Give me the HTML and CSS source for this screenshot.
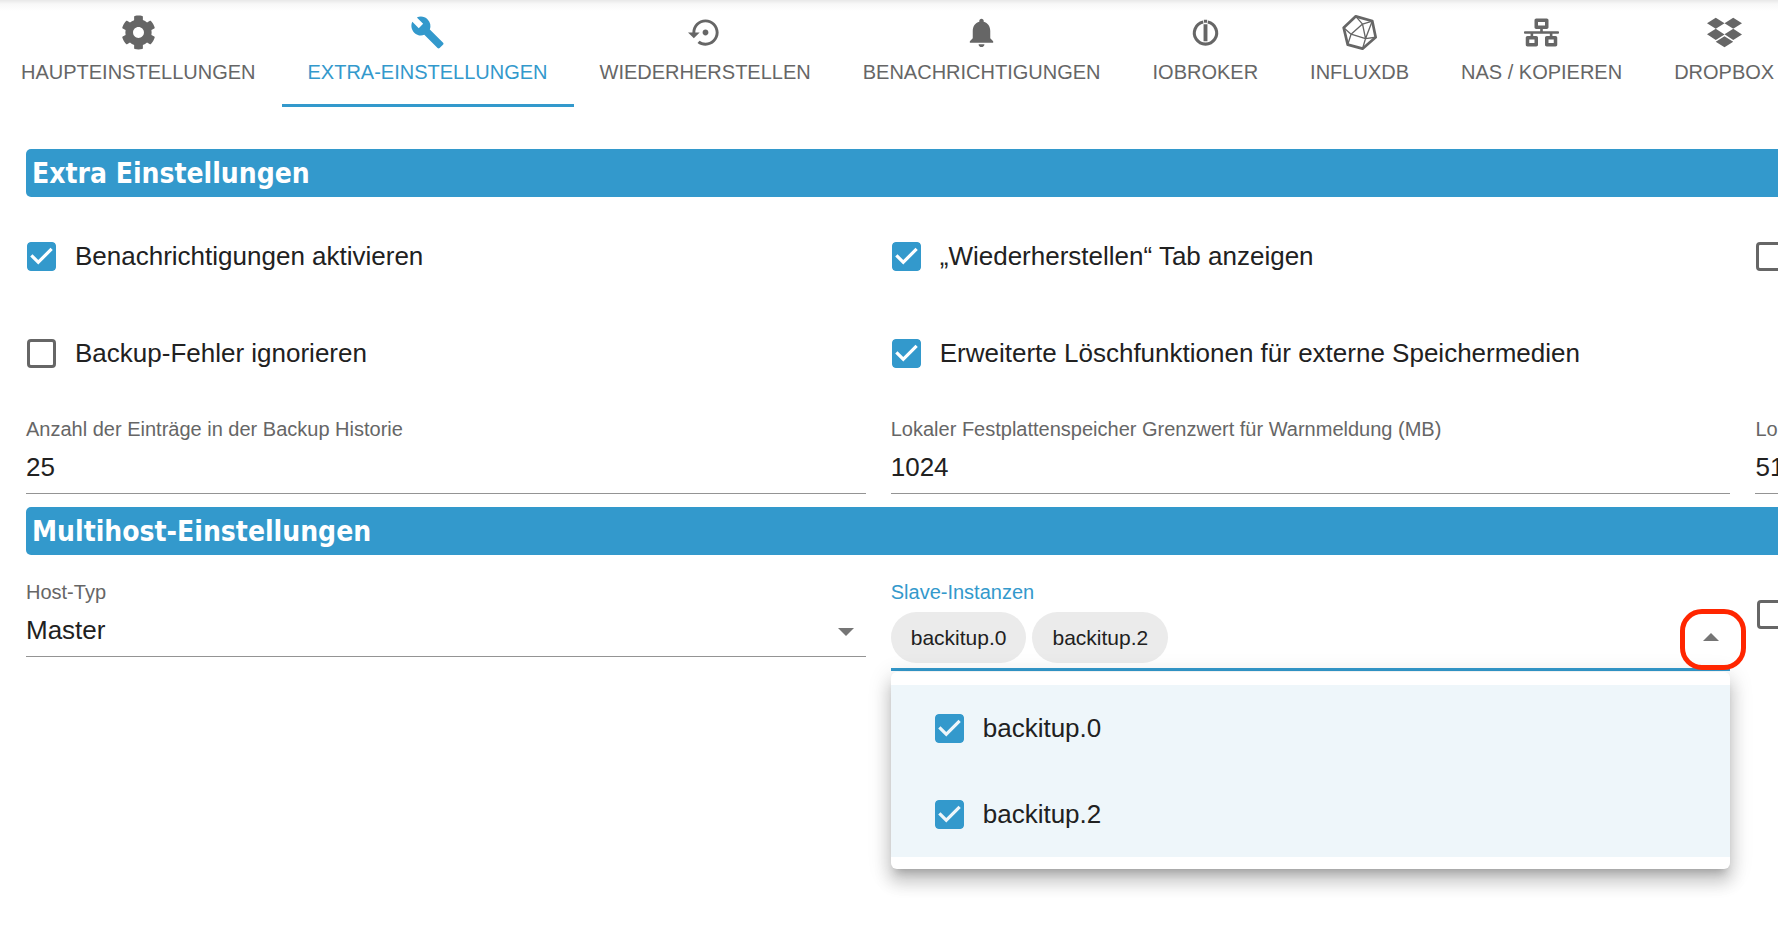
FILE: index.html
```html
<!DOCTYPE html>
<html lang="de">
<head>
<meta charset="utf-8">
<title>Backitup</title>
<link rel="stylesheet" href="styles.css">
</head>
<body>
<nav class="tabs">
  <button class="tab" type="button">
    <svg class="tab-icon" viewBox="0 0 512 512"><path d="M487.4 315.7l-42.6-24.6c4.3-23.2 4.3-47 0-70.2l42.6-24.6c4.9-2.8 7.1-8.6 5.5-14-11.1-35.6-30-67.8-54.7-94.6-3.8-4.1-10-5.1-14.8-2.3L380.8 110c-17.9-15.4-38.5-27.3-60.8-35.1V25.8c0-5.6-3.9-10.5-9.4-11.7-36.7-8.2-74.3-7.8-109.2 0-5.5 1.2-9.4 6.1-9.4 11.7V75c-22.2 7.9-42.8 19.8-60.8 35.1L88.7 85.5c-4.9-2.8-11-1.9-14.8 2.3-24.7 26.7-43.6 58.9-54.7 94.6-1.7 5.4.6 11.2 5.5 14L67.3 221c-4.3 23.2-4.3 47 0 70.2l-42.6 24.6c-4.9 2.8-7.1 8.6-5.5 14 11.1 35.6 30 67.8 54.7 94.6 3.8 4.1 10 5.1 14.8 2.3l42.6-24.6c17.9 15.4 38.5 27.3 60.8 35.1v49.2c0 5.6 3.9 10.5 9.4 11.7 36.7 8.2 74.3 7.8 109.2 0 5.5-1.2 9.4-6.1 9.4-11.7v-49.2c22.2-7.9 42.8-19.8 60.8-35.1l42.6 24.6c4.9 2.8 11 1.9 14.8-2.3 24.7-26.7 43.6-58.9 54.7-94.6 1.5-5.5-.7-11.3-5.6-14.1zM256 336c-44.1 0-80-35.9-80-80s35.9-80 80-80 80 35.9 80 80-35.9 80-80 80z"/></svg>
    <span>HAUPTEINSTELLUNGEN</span>
  </button>
  <button class="tab tab-active" type="button">
    <svg class="tab-icon" viewBox="0 0 24 24"><path d="M22.7 19l-9.1-9.1c.9-2.3.4-5-1.5-6.9-2-2-5-2.4-7.4-1.3L9 6 6 9 1.6 4.7C.4 7.1.9 10.1 2.9 12.1c1.9 1.9 4.6 2.4 6.9 1.5l9.1 9.1c.4.4 1 .4 1.4 0l2.3-2.3c.5-.4.5-1.1.1-1.4z"/></svg>
    <span>EXTRA-EINSTELLUNGEN</span>
  </button>
  <button class="tab" type="button">
    <svg class="tab-icon" viewBox="0 0 24 24"><path d="M14 12c0-1.1-.9-2-2-2s-2 .9-2 2 .9 2 2 2 2-.9 2-2zm-2-9c-4.97 0-9 4.03-9 9H0l4 4 4-4H5c0-3.87 3.13-7 7-7s7 3.13 7 7-3.13 7-7 7c-1.51 0-2.91-.49-4.06-1.3l-1.42 1.44C8.04 20.3 9.94 21 12 21c4.97 0 9-4.03 9-9s-4.03-9-9-9z"/></svg>
    <span>WIEDERHERSTELLEN</span>
  </button>
  <button class="tab" type="button">
    <svg class="tab-icon" viewBox="0 0 24 24"><path d="M12 22c1.100 0 2-.9 2-2h-4c0 1.100.89 2 2 2zm6-6v-5c0-3.070-1.640-5.640-4.500-6.320V4c0-.83-.67-1.500-1.500-1.500s-1.500.67-1.500 1.500v.68C7.630 5.360 6 7.920 6 11v5l-2 2v1h16v-1l-2-2z"/></svg>
    <span>BENACHRICHTIGUNGEN</span>
  </button>
  <button class="tab" type="button">
    <svg class="tab-icon" viewBox="0 0 36 36"><path d="M15.600 7.250A11.500 11.500 0 1 0 20.400 7.250" fill="none" stroke="currentColor" stroke-width="3.200"/><path d="M16.300 5h3.400v3h-3.400zM16 9.500h4v17.500h-4z"/></svg>
    <span>IOBROKER</span>
  </button>
  <button class="tab" type="button">
    <svg class="tab-icon" viewBox="0 0 104 104" fill="none" stroke="currentColor" stroke-linejoin="round"><path stroke-width="8" d="M41 4L90 18L100 66L61 100L17 88L5 38z"/><path stroke-width="4" d="M41 4L61 27L90 18L70 70L100 66M61 100L70 70L27 57L17 88M5 38L27 57L61 27L70 70"/></svg>
    <span>INFLUXDB</span>
  </button>
  <button class="tab" type="button">
    <svg class="tab-icon" viewBox="0 0 640 512"><path d="M640 264v-16c0-8.840-7.160-16-16-16H344v-40h72c17.670 0 32-14.330 32-32V32c0-17.670-14.330-32-32-32H224c-17.670 0-32 14.330-32 32v128c0 17.670 14.330 32 32 32h72v40H16c-8.840 0-16 7.160-16 16v16c0 8.840 7.160 16 16 16h104v40H64c-17.670 0-32 14.330-32 32v128c0 17.670 14.330 32 32 32h160c17.670 0 32-14.330 32-32V352c0-17.670-14.330-32-32-32h-56v-40h304v40h-56c-17.670 0-32 14.330-32 32v128c0 17.670 14.330 32 32 32h160c17.670 0 32-14.330 32-32V352c0-17.670-14.330-32-32-32h-56v-40h104c8.840 0 16-7.160 16-16zM256 128V64h128v64H256zm-64 320H96v-64h96v64zm352 0h-96v-64h96v64z"/></svg>
    <span>NAS / KOPIEREN</span>
  </button>
  <button class="tab" type="button">
    <svg class="tab-icon" viewBox="0 0 528 512"><path d="M264.400 116.300l-132 84.300 132 84.300-132 84.300L0 284.100l132.300-84.300L0 116.300 132.300 32l132.100 84.300zM131.600 395.700l132-84.300 132 84.300-132 84.300-132-84.300zm132.800-111.600l132-84.300-132-83.600L395.700 32 528 116.300l-132.300 84.300L528 284.800l-132.300 84.300-131.300-85z"/></svg>
    <span>DROPBOX</span>
  </button>
</nav>

<main class="content">
  <h2 class="section-title">Extra Einstellungen</h2>
  <div class="grid checks">
    <label class="check"><input class="box" type="checkbox" checked><span>Benachrichtigungen aktivieren</span></label>
    <label class="check"><input class="box" type="checkbox" checked><span>„Wiederherstellen“ Tab anzeigen</span></label>
    <div class="check"><input class="box" type="checkbox"></div>
    <label class="check"><input class="box" type="checkbox"><span>Backup-Fehler ignorieren</span></label>
    <label class="check"><input class="box" type="checkbox" checked><span>Erweiterte Löschfunktionen für externe Speichermedien</span></label>
  </div>
  <div class="grid fields">
    <div class="field">
      <label class="field-label" for="history">Anzahl der Einträge in der Backup Historie</label>
      <input class="control" id="history" type="text" value="25">
    </div>
    <div class="field">
      <label class="field-label" for="warn">Lokaler Festplattenspeicher Grenzwert für Warnmeldung (MB)</label>
      <input class="control" id="warn" type="text" value="1024">
    </div>
    <div class="field">
      <label class="field-label" for="limit">Lokaler</label>
      <input class="control" id="limit" type="text" value="512">
    </div>
  </div>

  <h2 class="section-title">Multihost-Einstellungen</h2>
  <div class="grid hosts">
    <div class="field">
      <label class="field-label" for="host">Host-Typ</label>
      <select class="control select" id="host"><option>Master</option></select>
    </div>
    <div class="field">
      <label class="field-label field-label-active" for="slaves">Slave-Instanzen</label>
      <div class="multi">
        <span class="chip">backitup.0</span>
        <span class="chip">backitup.2</span>
        <button class="toggle" id="slaves" type="button"><svg class="arrow" viewBox="0 0 16 8"><path d="M0 8L8 0L16 8z"/></svg></button>
        <div class="menu">
          <label class="option"><input class="box" type="checkbox" checked><span>backitup.0</span></label>
          <label class="option"><input class="box" type="checkbox" checked><span>backitup.2</span></label>
        </div>
      </div>
    </div>
    <div class="host-check"><input class="box" type="checkbox"></div>
  </div>
</main>
</body>
</html>
```
FILE: styles.css
```css
* {
  box-sizing: border-box;
}

body {
  margin: 0;
  min-height: 100vh;
  overflow: hidden;
  background: #fff;
  color: #212121;
  font-family: "Liberation Sans", Arial, sans-serif;
  font-size: 26px;
}

button,
input,
select {
  font: inherit;
  color: inherit;
}

.tabs {
  display: flex;
  overflow: hidden;
  background: linear-gradient(#e8e8e8, #f8f8f8 4px, #fff 11px);
}

.tab {
  flex: none;
  display: flex;
  flex-direction: column;
  align-items: center;
  gap: 10px;
  padding: 15px 26px 20px;
  border: 0;
  border-bottom: 3px solid transparent;
  background: none;
  color: #666;
  font-size: 20px;
  line-height: 24px;
  white-space: nowrap;
}

.tab:first-child {
  padding-left: 21px;
}

.tab-active {
  color: #3399cc;
  border-bottom-color: #3399cc;
}

.tab-icon {
  width: 35px;
  height: 35px;
}

.tab-icon:not([fill]) {
  fill: currentColor;
}

.content {
  width: max-content;
  padding: 42px 0 0 26px;
}

.section-title {
  margin: 0;
  padding: 2px 6px 0;
  border-radius: 5px;
  background: #3399cc;
  color: #fff;
  font: bold 28px/46px "DejaVu Sans Condensed", "DejaVu Sans", sans-serif;
}

.grid {
  display: grid;
  grid-template-columns: repeat(3, 47.23vw);
  column-gap: 25px;
}

.checks {
  margin-top: 11px;
  grid-auto-rows: 97px;
}

.check,
.option {
  display: flex;
  align-items: center;
  gap: 19px;
}

.check {
  padding-left: 1px;
}

.box {
  flex: none;
  appearance: none;
  width: 29px;
  height: 29px;
  margin: 0;
  border: 3px solid #666;
  border-radius: 4px;
}

.box:checked {
  border: 0;
  background: url("data:image/svg+xml,%3Csvg xmlns='http://www.w3.org/2000/svg' viewBox='3 3 18 18'%3E%3Cpath fill='%233399cc' d='M19 3H5c-1.110 0-2 .9-2 2v14c0 1.100.89 2 2 2h14c1.110 0 2-.9 2-2V5c0-1.100-.89-2-2-2zm-9 14l-5-5 1.410-1.410L10 14.170l7.590-7.590L19 8l-9 9z'/%3E%3C/svg%3E") center / cover;
}

.fields {
  padding: 15px 0 13px;
}

.hosts {
  padding-top: 25px;
}

.field {
  display: flex;
  flex-direction: column;
  gap: 6px;
}

.field-label {
  color: #666;
  font-size: 20px;
  line-height: 24px;
}

.field-label-active {
  color: #3399cc;
}

.control {
  appearance: none;
  width: 100%;
  height: 47px;
  margin: 0;
  padding: 0 0 6px;
  border: 0;
  border-bottom: 1px solid #949494;
  border-radius: 0;
  background: none;
  outline: 0;
}

.select {
  background: url("data:image/svg+xml,%3Csvg xmlns='http://www.w3.org/2000/svg' viewBox='0 0 16 8'%3E%3Cpath fill='%23757575' d='M0 0h16L8 8z'/%3E%3C/svg%3E") right 12px top 18px / 16px 8px no-repeat;
}

.multi {
  position: relative;
  display: flex;
  gap: 6px;
  padding: 2px 0 5px;
  border-bottom: 3px solid #3399cc;
}

.chip {
  padding: 0 20px;
  border-radius: 26px;
  background: #ebebeb;
  font-size: 21px;
  line-height: 51px;
}

.toggle {
  position: absolute;
  z-index: 2;
  top: -1px;
  right: -16px;
  display: flex;
  align-items: center;
  justify-content: center;
  width: 66px;
  height: 61px;
  padding: 0 5px 5px 0;
  border: 5px solid #ff2600;
  border-radius: 22px;
  background: none;
}

.arrow {
  width: 16px;
  height: 8px;
  fill: #757575;
}

.menu {
  position: absolute;
  top: 100%;
  left: 0;
  right: 0;
  margin-top: 4px;
  padding: 13px 0 12px;
  border-radius: 6px;
  background: #fff;
  box-shadow: 0 8px 8px -5px rgba(0, 0, 0, 0.2), 0 13px 16px 2px rgba(0, 0, 0, 0.14), 0 5px 22px 3px rgba(0, 0, 0, 0.12);
}

.option {
  height: 86px;
  padding-left: 44px;
  background: #eef6fa;
}

.host-check {
  padding: 20px 0 0 2px;
}
```
